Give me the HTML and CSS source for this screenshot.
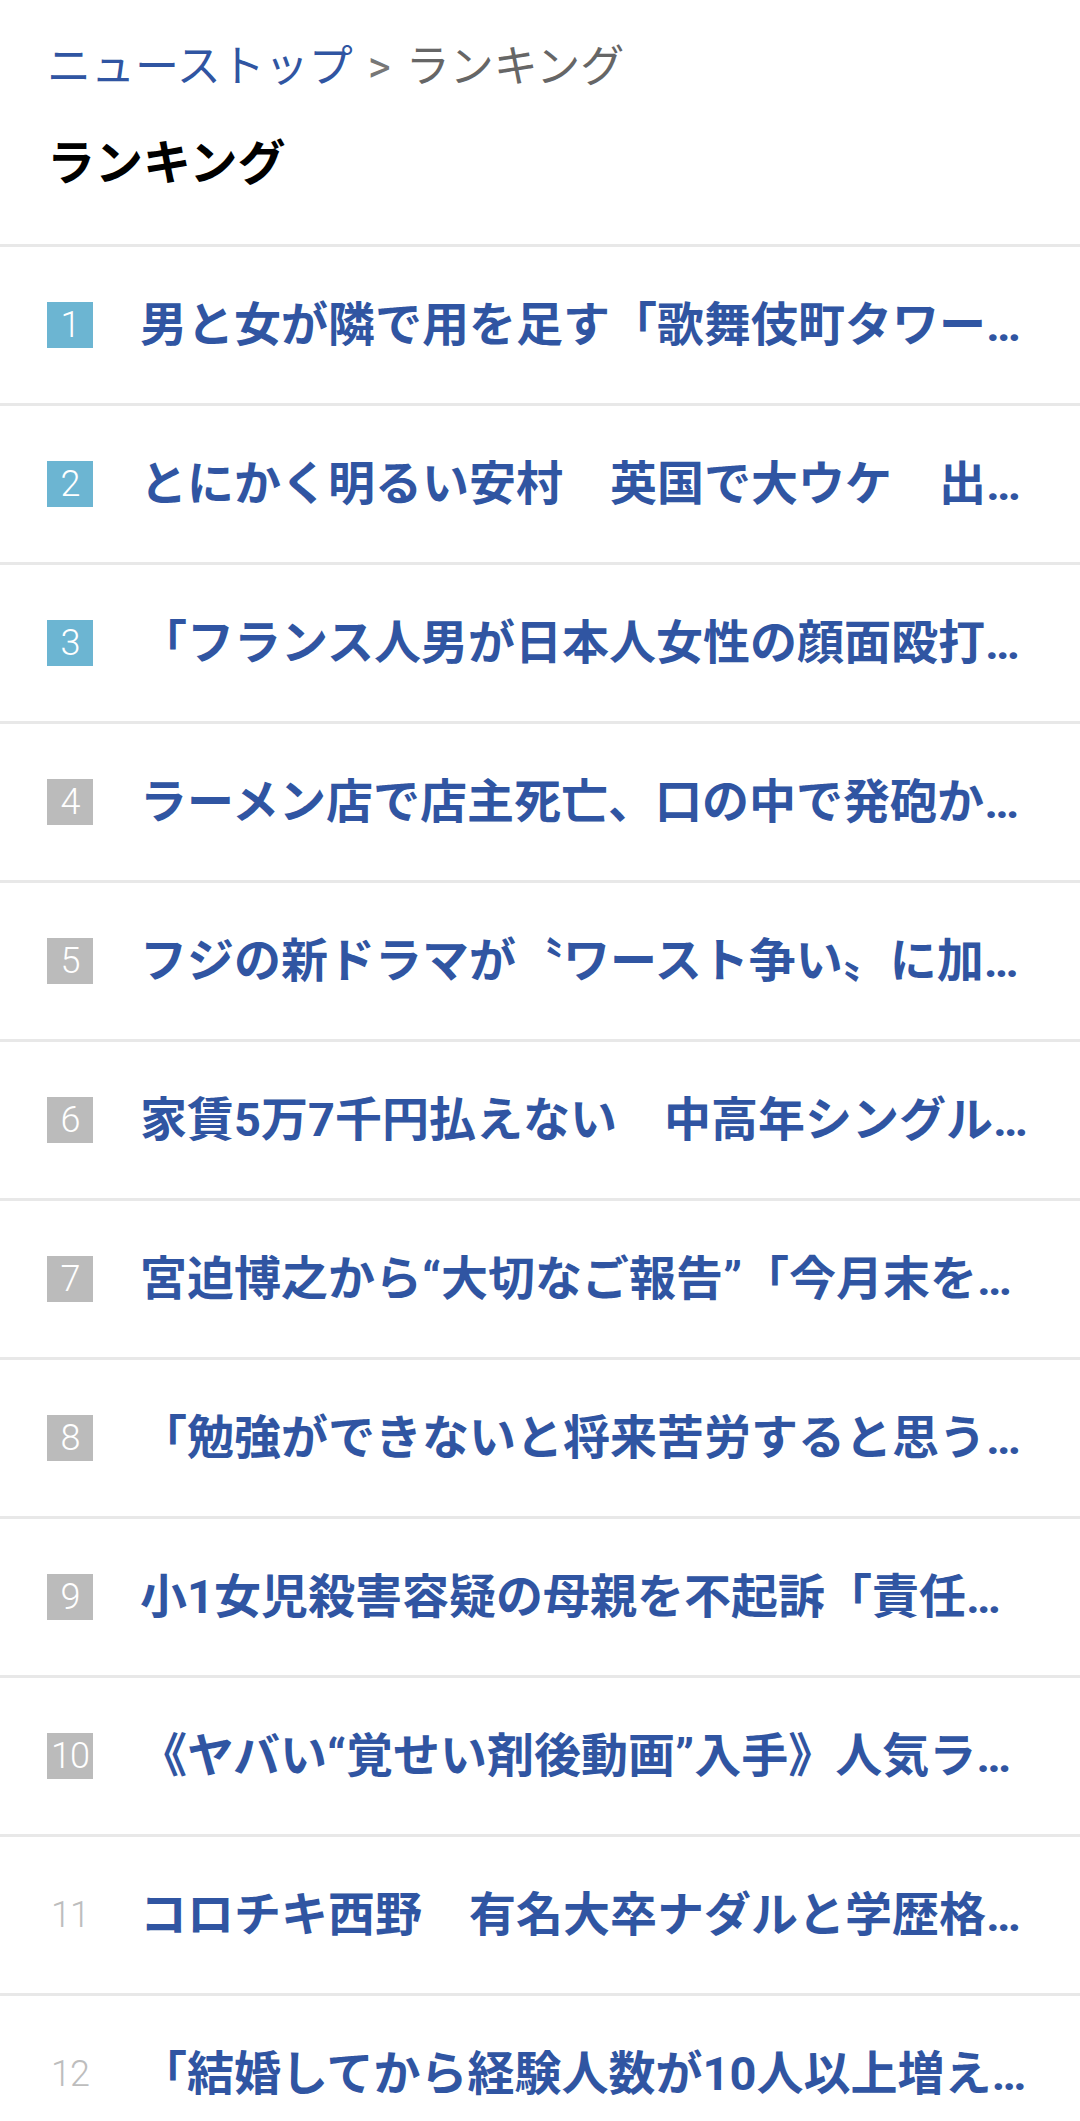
FILE: index.html
```html
<!DOCTYPE html>
<html lang="ja">
<head>
  <meta charset="UTF-8">
  <meta name="viewport" content="width=device-width, initial-scale=1.0">
  <title>ランキング</title>
  <link rel="stylesheet" href="styles.css">
</head>
<body>
  <div class="header">
    <div class="breadcrumb">
      <a href="#">ニューストップ</a>
      <span class="sep">&gt;</span>
      <span class="current">ランキング</span>
    </div>
    <h1>ランキング</h1>
  </div>

  <ul class="ranking">
    <li class="item top"><span class="rank">1</span><a class="title" href="#">男と女が隣で用を足す「歌舞伎町タワー」ジェンダーレストイレに賛否</a></li>
    <li class="item top"><span class="rank">2</span><a class="title" href="#">とにかく明るい安村　英国で大ウケ　出演番組の反響は</a></li>
    <li class="item top"><span class="rank">3</span><a class="title" href="#">「フランス人男が日本人女性の顔面殴打」動画が拡散</a></li>
    <li class="item"><span class="rank">4</span><a class="title" href="#">ラーメン店で店主死亡、口の中で発砲か　県警が捜査</a></li>
    <li class="item"><span class="rank">5</span><a class="title" href="#">フジの新ドラマが〝ワースト争い〟に加わる事態に</a></li>
    <li class="item"><span class="rank">6</span><a class="title" href="#">家賃5万7千円払えない　中高年シングル女性の苦境</a></li>
    <li class="item"><span class="rank">7</span><a class="title" href="#">宮迫博之から“大切なご報告”「今月末をもちまして」</a></li>
    <li class="item"><span class="rank">8</span><a class="title" href="#">「勉強ができないと将来苦労すると思う」親の本音</a></li>
    <li class="item"><span class="rank">9</span><a class="title" href="#">小1女児殺害容疑の母親を不起訴「責任能力なし」</a></li>
    <li class="item"><span class="rank">10</span><a class="title" href="#">《ヤバい“覚せい剤後動画”入手》人気ラッパーの素顔</a></li>
    <li class="item plain"><span class="rank">11</span><a class="title" href="#">コロチキ西野　有名大卒ナダルと学歴格差を語る</a></li>
    <li class="item plain"><span class="rank">12</span><a class="title" href="#">「結婚してから経験人数が10人以上増えた」妻の告白</a></li>
  </ul>
</body>
</html>
```

FILE: styles.css
```css
body {
  margin: 0;
  padding: 0;
  background: #fff;
  font-family: Roboto, "Noto Sans CJK JP", sans-serif;
}
a {
  text-decoration: none;
}
.header {
  padding: 36px 47px 48px;
  border-bottom: 3px solid #e8e8e8;
}
.breadcrumb {
  font-size: 44px;
  line-height: 62px;
  color: #666;
  white-space: nowrap;
}
.breadcrumb a {
  color: #3055a2;
}
.breadcrumb .sep {
  margin: 0 4px;
  color: #777;
}
h1 {
  margin: 34px 0 0;
  font-size: 48px;
  line-height: 64px;
  font-weight: bold;
  color: #000;
}
.ranking {
  list-style: none;
  margin: 0;
  padding: 0;
}
.item {
  display: flex;
  align-items: center;
  height: 156px;
  padding: 0 40px 0 47px;
  border-bottom: 3px solid #e8e8e8;
}
.rank {
  flex: none;
  width: 46px;
  height: 46px;
  margin-right: 47px;
  display: flex;
  align-items: center;
  justify-content: center;
  font-size: 36px;
  font-weight: 300;
  letter-spacing: -1px;
  color: #fff;
  background: #bbbbbb;
}
.item.top .rank {
  background: #6cb5d2;
}
.item.plain .rank {
  background: none;
  color: #bdbdbd;
}
.title {
  flex: 1;
  min-width: 0;
  overflow: hidden;
  white-space: nowrap;
  text-overflow: ellipsis;
  font-size: 47px;
  line-height: 60px;
  font-weight: bold;
  color: #3055a2;
}
```
